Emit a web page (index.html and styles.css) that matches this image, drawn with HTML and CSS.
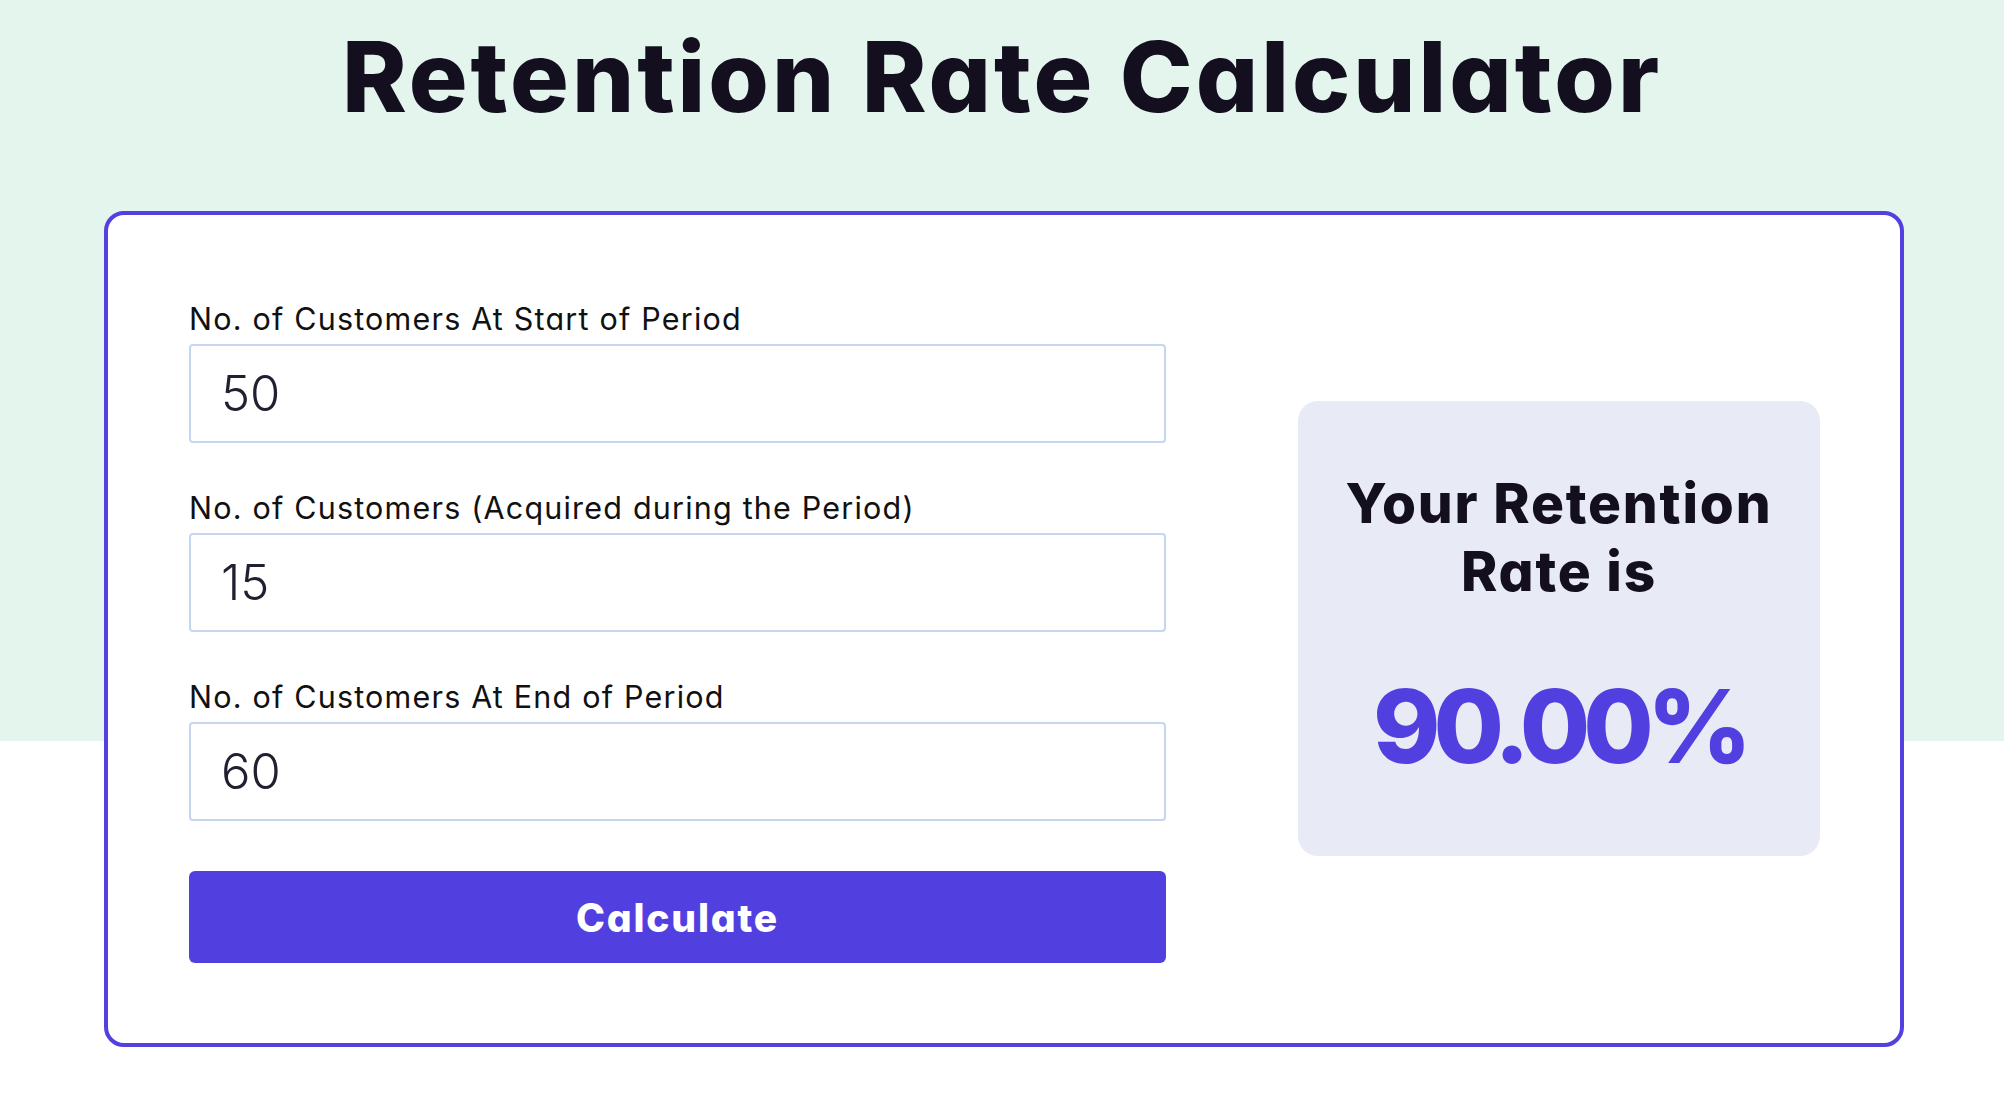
FILE: index.html
```html
<!DOCTYPE html>
<html lang="en">
<head>
<meta charset="utf-8">
<title>Retention Rate Calculator</title>
<link rel="stylesheet" href="styles.css">
</head>
<body>
<div class="page">
  <header class="hero">
    <h1 class="hero-title">Retention Rate Calculator</h1>
  </header>
  <section class="calc-card">
    <form class="calc-form" onsubmit="return false;">
      <div class="field">
        <label class="field-label" for="start">No. of Customers At Start of Period</label>
        <input class="field-input" id="start" type="text" value="50">
      </div>
      <div class="field">
        <label class="field-label" for="acquired">No. of Customers (Acquired during the Period)</label>
        <input class="field-input" id="acquired" type="text" value="15">
      </div>
      <div class="field">
        <label class="field-label" for="end">No. of Customers At End of Period</label>
        <input class="field-input" id="end" type="text" value="60">
      </div>
      <button class="calc-button" type="button">Calculate</button>
    </form>
    <div class="result">
      <h2 class="result-title">Your Retention<br>Rate is</h2>
      <div class="result-value">90.00%</div>
    </div>
  </section>
</div>
</body>
</html>
```
FILE: styles.css
```css
* { box-sizing: border-box; }

html, body {
  margin: 0;
  padding: 0;
}

body {
  font-family: "Inter", "Liberation Sans", sans-serif;
  font-feature-settings: "cv11" 1;
  color: #130f1f;
  background: #ffffff;
}

.page {
  background: linear-gradient(to bottom, #e4f5ed 0, #e4f5ed 741px, #ffffff 741px);
  min-height: 1094px;
  padding-top: 28px;
  padding-bottom: 40px;
}

.hero {
  display: flex;
  justify-content: center;
}

.hero-title {
  margin: 0;
  font-size: 98px;
  line-height: 98px;
  font-weight: 800;
  letter-spacing: 3px;
  color: #130f1f;
}

.calc-card {
  margin: 85px 0 0 104px;
  width: 1800px;
  background: #ffffff;
  border: 4px solid #5240e0;
  border-radius: 20px;
  padding: 86px 80px 80px 81px;
  display: grid;
  grid-template-columns: 977px 522px;
  justify-content: space-between;
  align-items: center;
}

.calc-form {
  display: flex;
  flex-direction: column;
  gap: 47px;
}

.field {
  display: flex;
  flex-direction: column;
  gap: 7px;
}

.field-label {
  font-size: 30.5px;
  line-height: 36px;
  font-weight: 400;
  letter-spacing: 1.2px;
  color: #111111;
}

.field-input {
  height: 99px;
  width: 100%;
  border: 2px solid #c5d7f0;
  border-radius: 4px;
  padding: 0 30px;
  font-family: "Inter", "Liberation Sans", sans-serif;
  font-size: 49px;
  font-weight: 300;
  color: #202030;
  background: #ffffff;
  outline: none;
}

.calc-button {
  margin-top: 3px;
  height: 92px;
  width: 100%;
  border: none;
  border-radius: 6px;
  background: #523fe0;
  color: #ffffff;
  font-family: "Inter", "Liberation Sans", sans-serif;
  font-feature-settings: "cv11" 1;
  font-size: 39px;
  font-weight: 800;
  letter-spacing: 1.8px;
  cursor: pointer;
}

.result {
  background: #e8eaf6;
  border-radius: 20px;
  padding: 68px 10px 69px;
  margin-bottom: 8px;
  text-align: center;
}

.result-title {
  margin: 0;
  font-size: 55px;
  line-height: 68px;
  font-weight: 800;
  letter-spacing: 1.8px;
  color: #130f1f;
}

.result-value {
  margin-top: 60px;
  font-size: 102px;
  line-height: 122px;
  font-weight: 800;
  letter-spacing: -7px;
  color: #523fe0;
}
```
